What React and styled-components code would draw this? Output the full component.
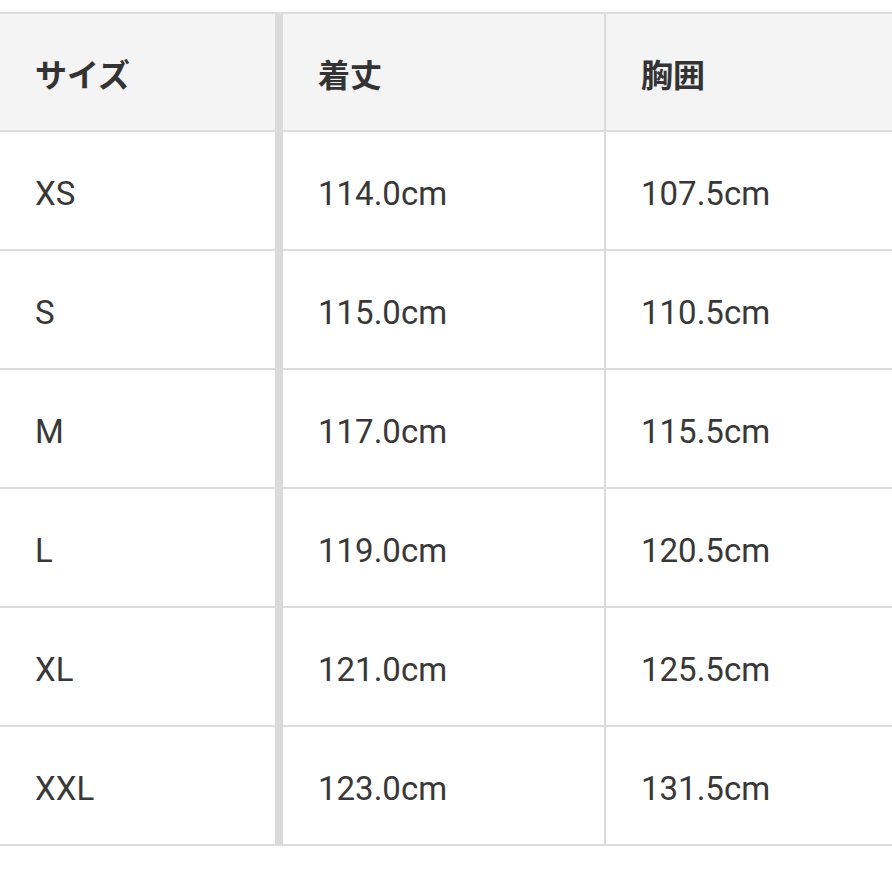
import React from 'react'
import styled, { createGlobalStyle } from 'styled-components'

const GlobalStyle = createGlobalStyle`
  html, body {
    margin: 0;
    padding: 0;
    background: #ffffff;
  }
  body {
    font-family: Roboto, "Noto Sans CJK JP", sans-serif;
    color: #333333;
  }
`

const Page = styled.div`
  width: 892px;
  height: 892px;
  overflow: hidden;
  padding-top: 12px;
  box-sizing: border-box;
`

const Grid = styled.div`
  display: grid;
  grid-template-columns: 283px 323px 1fr;
  border-top: 2px solid #dcdcdc;
`

const Cell = styled.div`
  box-sizing: border-box;
  height: ${(p) => (p.$head ? '118px' : '119px')};
  display: flex;
  align-items: center;
  padding: ${(p) => (p.$head ? '2px' : '6px')} 0 0 35px;
  border-bottom: 2px solid #dcdcdc;
  border-right: ${(p) => (p.$divider ? `${p.$divider}px solid #dadada` : 'none')};
  background: ${(p) => (p.$head ? '#f4f4f4' : '#ffffff')};
  font-family: ${(p) =>
    p.$head ? '"Noto Sans CJK JP", sans-serif' : 'Roboto, sans-serif'};
  font-size: ${(p) => (p.$head ? '32px' : '33px')};
  font-weight: ${(p) => (p.$head ? 700 : 400)};
  color: ${(p) => (p.$head ? '#333333' : '#383838')};
  white-space: nowrap;
`

const headers = ['サイズ', '着丈', '胸囲']

const rows = [
  ['XS', '114.0cm', '107.5cm'],
  ['S', '115.0cm', '110.5cm'],
  ['M', '117.0cm', '115.5cm'],
  ['L', '119.0cm', '120.5cm'],
  ['XL', '121.0cm', '125.5cm'],
  ['XXL', '123.0cm', '131.5cm'],
]

// divider widths per column: thick after the size column, thin after the length column
const dividers = [8, 2, 0]

export default function App() {
  return (
    <Page>
      <GlobalStyle />
      <Grid>
        {headers.map((h, i) => (
          <Cell key={h} $head $divider={dividers[i]}>
            {h}
          </Cell>
        ))}
        {rows.map((row) =>
          row.map((v, i) => (
            <Cell key={row[0] + i} $divider={dividers[i]}>
              {v}
            </Cell>
          )),
        )}
      </Grid>
    </Page>
  )
}
